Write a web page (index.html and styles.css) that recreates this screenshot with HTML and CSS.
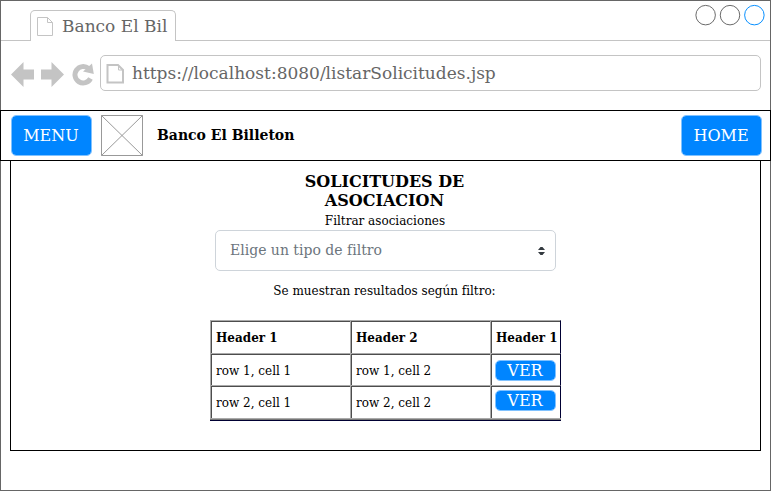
FILE: index.html
```html
<!DOCTYPE html>
<html lang="es">
<head>
<meta charset="utf-8">
<title>Banco El Billeton</title>
<link rel="stylesheet" href="styles.css">
</head>
<body>
<div class="window">
  <div class="tabs">
    <div class="tab">
      <svg class="tab-doc" width="18" height="20" viewBox="0 0 18 20"><path d="M1.500 1.500h10l5 5v13h-15zM11.500 1.500v5h5"/></svg>
      <span>Banco El Bil</span>
    </div>
    <div class="strip"></div>
    <svg class="controls" width="80" height="40" viewBox="0 0 80 40">
      <circle cx="15" cy="14.500" r="10"/><circle cx="40" cy="14.500" r="10"/><circle class="active" cx="65" cy="14.500" r="10"/>
    </svg>
  </div>
  <div class="toolbar">
    <svg class="nav" width="84" height="26" viewBox="0 0 84 26">
      <path d="M0 12.500 12.500 0v7.500H23v10H12.500V25z"/>
      <path d="M53 12.500 40.500 0v7.500H30v10h10.500V25z"/>
      <path class="reload" d="M79.500 16.500A8.200 8.200 0 1 1 77.500 6.500"/>
      <path d="M81 1.500 82.800 12 72 9.500z"/>
    </svg>
    <div class="address">
      <svg class="url-doc" width="18" height="21" viewBox="0 0 18 21"><path d="M1.500 2h10.500l5 5v12.500H1.500z"/><path class="fold" d="M12.500 2v5h4.500"/></svg>
      <span>https://localhost:8080/listarSolicitudes.jsp</span>
    </div>
  </div>
  <header class="bar">
    <a class="btn">MENU</a>
    <svg class="logo" width="42" height="41" viewBox="0 0 42 41"><path d="M.5.5h41v40H.5zM.5.5l41 40M.5 40.500l41-40"/></svg>
    <strong>Banco El Billeton</strong>
    <a class="btn home">HOME</a>
  </header>
  <main class="content">
    <h1>SOLICITUDES DE<br>ASOCIACION</h1>
    <p class="label">Filtrar asociaciones</p>
    <div class="select">
      <span>Elige un tipo de filtro</span>
      <svg width="7" height="8" viewBox="0 0 7 8"><path d="M0 3 2.500 0h2L7 3zM0 5l2.500 3h2L7 5z"/></svg>
    </div>
    <p class="result">Se muestran resultados según filtro:</p>
    <div class="table">
      <div class="cell head">Header 1</div><div class="cell head">Header 2</div><div class="cell head last">Header 1</div>
      <div class="cell">row 1, cell 1</div><div class="cell">row 1, cell 2</div><div class="cell last"><a class="ver">VER</a></div>
      <div class="cell">row 2, cell 1</div><div class="cell">row 2, cell 2</div><div class="cell last up"><a class="ver">VER</a></div>
    </div>
  </main>
</div>
</body>
</html>
```
FILE: styles.css
```css
* { box-sizing: border-box; }
body { margin: 0; background: #fff; color: #000; font-family: "DejaVu Serif", serif; font-size: 12px; }
p, h1 { margin: 0; }
svg { display: block; flex: none; fill: none; }
.window { width: 771px; height: 491px; border: 1px solid #666; }
.tabs { display: flex; height: 40px; padding-left: 29px; background: linear-gradient(#c4c4c4, #c4c4c4) 0 39px / 29px 1px no-repeat; }
.tab { display: flex; width: 146px; height: 31px; margin-top: 9px; padding: 5px 0 0 5px; border: 1px solid #c4c4c4; border-bottom: 0; border-radius: 5px 5px 0 0; color: #666; font-size: 17px; line-height: 20px; white-space: nowrap; }
.tab span { margin-left: 8px; }
.tab-doc { stroke: #c4c4c4; }
.strip { flex: 1; border-bottom: 1px solid #c4c4c4; }
.controls { stroke: #666; border-bottom: 1px solid #c4c4c4; }
.controls .active { stroke: #008cff; }
.toolbar { display: flex; height: 69px; padding: 14px 0 0 10px; }
.nav { margin-top: 7px; fill: #c4c4c4; }
.nav .reload { fill: none; stroke: #c4c4c4; stroke-width: 5; }
.address { display: flex; width: 661px; height: 36px; margin-left: 5px; padding: 7px 0 0 5px; border: 1px solid #c4c4c4; border-radius: 5px; color: #666; font-size: 17px; line-height: 21px; }
.address span { margin-left: 8px; }
.url-doc { stroke: #c4c4c4; stroke-width: 2; }
.url-doc .fold { stroke-width: 1; }
.bar { display: flex; height: 51px; margin: 0 -1px; padding: 4px 8px 0 10px; border: 1px solid #000; font-size: 14px; line-height: 41px; }
.btn { width: 81px; height: 41px; padding-right: 1px; border: 1px solid #80c2ff; border-radius: 5px; background: #0085ff; background-clip: padding-box; color: #fff; font-size: 16px; line-height: 39px; text-align: center; }
.home { margin-left: auto; }
.logo { margin: 0 14px 0 9px; stroke: #999; }
.content { display: flex; flex-direction: column; align-items: center; width: 751px; height: 290px; margin-left: 9px; padding-top: 11px; border: 1px solid #000; border-top: 0; }
h1 { margin-right: 2px; font-size: 16px; line-height: 19px; text-align: center; }
.label { margin: 3px 1px 0 0; line-height: 16px; }
.select { display: flex; align-items: center; width: 341px; height: 41px; margin-top: 1px; padding: 0 10px 0 14px; border: 1px solid #ced4da; border-radius: 5px; color: #6c757d; font-size: 14px; }
.select span { padding-bottom: 2px; }
.select svg { margin-left: auto; fill: #343a40; }
.result { margin: 12px 2px 0 0; line-height: 16px; }
.table { display: grid; grid-template-columns: 140px 140px 71px; grid-template-rows: 33px 32px 33px; width: 351px; margin: 21px 0 0; border-bottom: 1px solid #777; box-shadow: 0 1px #000033; }
.table::after { content: ""; grid-column: 1 / -1; height: 1px; background: #aaa; }
.cell { display: flex; align-items: center; padding: 2px 0 0 5px; border: 0 solid #aaa; border-width: 1px 0 0 1px; box-shadow: inset 1px 1px #4d4d4d; white-space: nowrap; }
.head { font-weight: bold; }
.last { padding-left: 4px; border-right: 1px solid #000033; }
.head.last { padding-left: 5px; }
.ver { width: 61px; height: 21px; padding-right: 1px; border: 1px solid #80c2ff; border-radius: 5px; background: #0085ff; background-clip: padding-box; color: #fff; font-size: 16px; line-height: 19px; text-align: center; }
.up { align-items: flex-start; padding-top: 4px; }
```
